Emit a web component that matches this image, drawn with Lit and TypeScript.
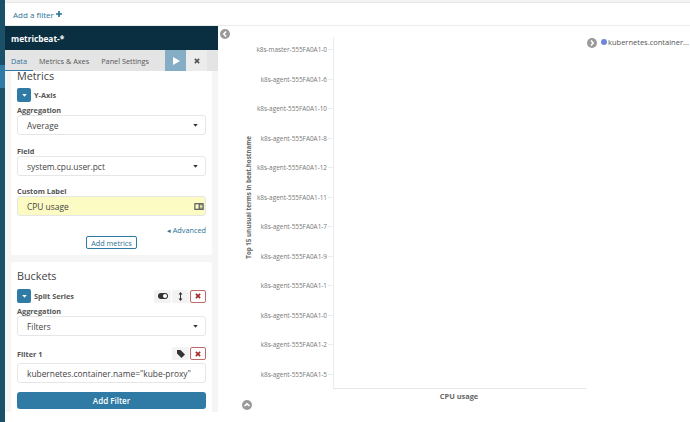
import { LitElement, html, css } from "lit";
import { customElement } from "lit/decorators.js";

const labels = ["k8s-master-555FA0A1-0","k8s-agent-555FA0A1-6","k8s-agent-555FA0A1-10","k8s-agent-555FA0A1-8","k8s-agent-555FA0A1-12","k8s-agent-555FA0A1-11","k8s-agent-555FA0A1-7","k8s-agent-555FA0A1-9","k8s-agent-555FA0A1-1","k8s-agent-555FA0A1-0","k8s-agent-555FA0A1-2","k8s-agent-555FA0A1-5"];

const caret = html`<svg class="caret" width="5" height="3" viewBox="0 0 6 4"><path d="M0 0h6L3 3.600z" fill="currentColor"/></svg>`;
const whiteCaret = html`<svg width="5" height="3" viewBox="0 0 6 4"><path d="M0 0h6L3 3.600z" fill="#fff"/></svg>`;
const cross = html`<svg width="6" height="6" viewBox="0 0 7 7"><path d="M1 1l5 5M6 1L1 6" stroke="currentColor" stroke-width="1.900"/></svg>`;
const circ = (d: string) => html`<svg class="circ" width="10" height="10" viewBox="0 0 10 10"><circle cx="5" cy="5" r="5" fill="#9a9a9a"/><path d="${d}" fill="none" stroke="#fff" stroke-width="1.600"/></svg>`;

@customElement("app-root")
export class AppRoot extends LitElement {
  static styles = css`
    :host { display: flex; width: 690px; height: 422px; overflow: hidden; background: #fff;
      font-family: "Open Sans", "Liberation Sans", sans-serif; color: #444; }
    .rail { width: 5px; flex: none; background: #1b5069; display: flex; flex-direction: column; }
    .rail-active { height: 23px; margin-top: 65px; background: #2f7ba5; }
    .content { flex: 1; min-width: 0; display: flex; flex-direction: column; }
    .topstrip { height: 3px; background: #f3f3f3; border-bottom: 1px solid #e6e6e6; box-sizing: border-box; }
    .filterbar { height: 23px; box-sizing: border-box; padding-left: 8px; display: flex; align-items: center; gap: 2px;
      font-size: 8px; color: #2d7196; border-bottom: 1px solid #ececec; }
    .main { display: flex; height: 396px; }
    .side { width: 213px; height: 386px; flex: none; background: #f5f5f5; display: flex; flex-direction: column; }
    .title { height: 24px; flex: none; background: #0a2f41; color: #fff; font-size: 8.300px; font-weight: 700; display: flex; align-items: center; padding-left: 6px; }
    .tabs { height: 21px; flex: none; box-sizing: border-box; background: #e4e4e4; display: flex; align-items: stretch; font-size: 7.300px; color: #555; position: relative; z-index: 1; white-space: nowrap; }
    .tab { display: flex; align-items: center; margin-left: 12px; }
    .tab.first { margin-left: 6px; color: #2d7196; }
    .underline { position: absolute; left: 0; bottom: 0; width: 28px; height: 1px; background: #2f7ba5; }
    .play { width: 21px; margin-left: 16px; background: #86adc6; display: flex; align-items: center; justify-content: center; }
    .close { width: 21px; background: #ececec; color: #555; display: flex; align-items: center; justify-content: center; }
    .scroll { flex: 1; min-height: 0; padding: 0 6px; display: flex; flex-direction: column; gap: 7px; }
    .card { background: #fff; padding: 0 6px; border-radius: 2px; flex: none; }
    .card.metrics { height: 188px; margin-top: -4px; }
    .card.buckets { flex: 1; overflow: hidden; }
    h3 { margin: 0; font-weight: 400; font-size: 10.800px; color: #444; line-height: 17px; }
    .rowhead { display: flex; align-items: center; gap: 3px; height: 14px; margin-top: 4px; font-size: 7.300px; font-weight: 700; color: #555; }
    .toggle { width: 14px; height: 14px; background: #2f7ba5; color: #fff; border-radius: 2px; display: flex; align-items: center; justify-content: center; }
    .lbl { font-size: 7.300px; font-weight: 700; color: #555; line-height: 10px; }
    .lbl.afterhead { margin-top: 3px; }
    .ctl { height: 20px; box-sizing: border-box; border: 1px solid #e6e6e6; border-radius: 3px; background: #fff; display: flex; align-items: center; justify-content: space-between; padding: 0 7px 0 9px; font-size: 8.400px; color: #444; white-space: nowrap; }
    .ctl.yellow { background: #fbfbc3; padding-right: 1px; }
    .mb { margin-bottom: 11px; }
    .mb2 { margin-bottom: 10px; }
    .caret { color: #333; }
    .adv { text-align: right; font-size: 7.300px; color: #2d7196; line-height: 11px; margin-top: 9px; }
    .addwrap { display: flex; justify-content: center; }
    .addbtn { height: 11px; padding: 0 4px; border: 1px solid #2f7ba5; border-radius: 2px; font-size: 7.300px; color: #2d7196; display: flex; align-items: center; }
    .actions { margin-left: auto; display: flex; gap: 1px; font-weight: 400; }
    .act { width: 17px; height: 13px; background: #f3f3f3; color: #333; display: flex; align-items: center; justify-content: center; border-radius: 2px; }
    .act.x { width: 14px; height: 11px; background: #fff; border: 1px solid #c0686a; color: #a52a2a; }
    .primary { height: 17px; margin-top: 9px; background: #2f7ba5; color: #fff; border-radius: 3px; font-size: 8px; font-weight: 600; display: flex; align-items: center; justify-content: center; }
    .filterhead { display: flex; align-items: center; height: 13px; margin-bottom: 3px; margin-top: 11px; }
    .chart { flex: 1; min-width: 0; display: flex; position: relative; height: 396px; }
    .collapse { width: 10px; flex: none; margin: 3px 0 0 2px; line-height: 0; }
    .collapse2 { position: absolute; left: 24px; top: 374px; line-height: 0; }
    .ytitle-box { width: 10px; flex: none; margin-left: 13px; margin-right: 1px; height: 342px; display: flex; align-items: center; justify-content: center; }
    .ytitle { writing-mode: vertical-rl; transform: rotate(180deg); font-size: 6.200px; font-weight: 700; color: #666; white-space: nowrap; }
    .ylabels { width: 79px; flex: none; height: 354px; margin-top: 9px; display: flex; flex-direction: column; justify-content: space-around; }
    .ylabel { display: flex; justify-content: flex-end; align-items: center; font-size: 6.400px; color: #777; white-space: nowrap; height: 10px; }
    .tick { width: 5px; height: 1px; background: #ececec; margin-left: 1px; flex: none; }
    .plot { width: 252px; flex: none; height: 351px; margin-top: 11px; border-left: 1px solid #ececec; border-bottom: 1px solid #e6e6e6; }
    .xtitle { position: absolute; left: 115px; width: 252px; top: 365px; text-align: center; font-size: 7.400px; font-weight: 700; color: #666; }
    .legend { position: absolute; left: 369px; top: 9px; display: flex; align-items: center; font-size: 7.500px; color: #555; white-space: nowrap; }
    .legend-arrow { margin-top: 3px; line-height: 0; }
    .circ { display: block; }
    .dot { width: 6px; height: 6px; border-radius: 50%; background: #6f87d8; margin: 0 1px 0 4px; }
  `;
  render() {
    return html`
      <div class="rail"><div class="rail-active"></div></div>
      <div class="content">
      <div class="topstrip"></div>
      <div class="filterbar"><span>Add a filter</span><svg width="6" height="6" viewBox="0 0 7 7"><path d="M3.500 0v7M0 3.500h7" stroke="currentColor" stroke-width="2"/></svg></div>
      <div class="main">
        <div class="side">
          <div class="title">metricbeat-*</div>
          <div class="tabs">
            <div class="tab first">Data</div><div class="tab">Metrics &amp; Axes</div><div class="tab">Panel Settings</div>
            <div class="underline"></div>
            <div class="play"><svg width="8" height="8" viewBox="0 0 8 8"><path d="M1 0l7 4-7 4z" fill="#fff"/></svg></div>
            <div class="close">${cross}</div>
          </div>
          <div class="scroll">
            <div class="card metrics">
              <h3>Metrics</h3>
              <div class="rowhead"><div class="toggle">${whiteCaret}</div>Y-Axis</div>
              <div class="lbl afterhead">Aggregation</div>
              <div class="ctl mb">Average ${caret}</div>
              <div class="lbl">Field</div>
              <div class="ctl mb2">system.cpu.user.pct ${caret}</div>
              <div class="lbl">Custom Label</div>
              <div class="ctl yellow"><span>CPU usage</span>
                <svg width="10" height="7" viewBox="0 0 11 8"><rect width="11" height="8" rx="1" fill="#666"/><rect x="1.500" y="1.500" width="3.500" height="5" fill="#fbfbc3"/><path d="M6.500 2.500h3M6.500 4h3M6.500 5.500h3" stroke="#fbfbc3"/></svg></div>
              <div class="adv">◂ Advanced</div>
              <div class="addwrap"><div class="addbtn">Add metrics</div></div>
            </div>
            <div class="card buckets">
              <h3 style="padding-top:5px">Buckets</h3>
              <div class="rowhead" style="margin-top:5px"><div class="toggle">${whiteCaret}</div>Split Series
                <div class="actions">
                  <div class="act"><svg width="10" height="6" viewBox="0 0 10 6"><rect width="10" height="6" rx="3" fill="#333"/><circle cx="7" cy="3" r="2" fill="#fff"/></svg></div>
                  <div class="act"><svg width="5" height="9" viewBox="0 0 5 9"><path d="M2.500 0L4.500 2.500H.5zM2.500 9L.5 6.500h4zM2 2h1v5H2z" fill="#333"/></svg></div>
                  <div class="act x">${cross}</div>
                </div></div>
              <div class="lbl afterhead">Aggregation</div>
              <div class="ctl">Filters ${caret}</div>
              <div class="filterhead"><span class="lbl">Filter 1</span>
                <div class="actions">
                  <div class="act"><svg width="8" height="8" viewBox="0 0 8 8"><path d="M0 0h3.500L8 4.500 4.500 8 0 3.500z" fill="#333"/></svg></div>
                  <div class="act x">${cross}</div>
                </div></div>
              <div class="ctl">kubernetes.container.name="kube-proxy"</div>
              <div class="primary">Add Filter</div>
            </div>
          </div>
        </div>
        <div class="chart">
          <div class="collapse">${circ("M6 2.500L3.800 5 6 7.500")}</div>
          <div class="collapse2">${circ("M2.500 6L5 3.800 7.500 6")}</div>
          <div class="ytitle-box"><span class="ytitle">Top 15 unusual terms in beat.hostname</span></div>
          <div class="ylabels">${labels.map(l => html`<div class="ylabel">${l}<span class="tick"></span></div>`)}</div>
          <div class="plot"></div>
          <div class="xtitle">CPU usage</div>
          <div class="legend"><span class="legend-arrow">${circ("M4 2.500L6.200 5 4 7.500")}</span><span class="dot"></span>kubernetes.container...</div>
        </div>
      </div>
      </div>
    `;
  }
}
